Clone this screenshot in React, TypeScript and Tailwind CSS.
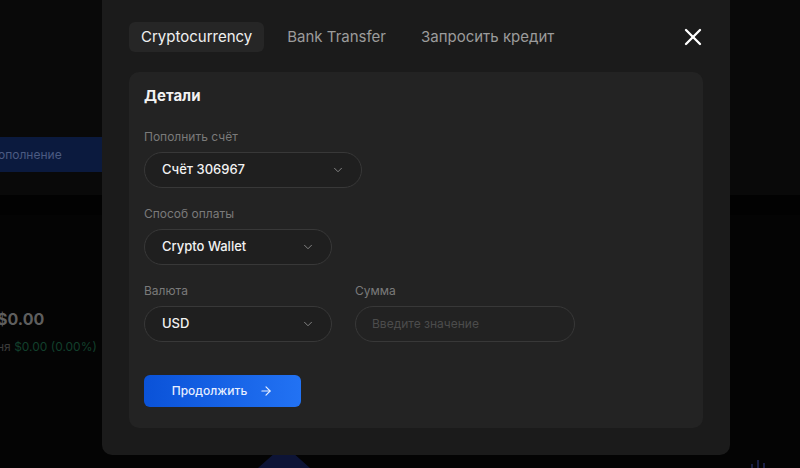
import { ChevronDown, ArrowRight, X } from "lucide-react";

const FONT = { fontFamily: "Inter, 'Noto Sans', sans-serif" };

const TABS = ["Cryptocurrency", "Bank Transfer", "Запросить кредит"];

function Select({ value, width }: { value: string; width: string }) {
  return (
    <div
      className={`flex h-9 ${width} items-center justify-between rounded-full border border-[#383838] bg-[#1f1f1f] pl-[17px] pr-[16px]`}
    >
      <span className="text-[13px] font-medium text-[#f2f2f2]">{value}</span>
      <ChevronDown className="h-[14px] w-[14px] text-[#8a8a8a]" strokeWidth={1.6} />
    </div>
  );
}

function Label({ children }: { children: string }) {
  return <div className="h-[14px] text-[12px] leading-[14px] text-[#7a7a7a]">{children}</div>;
}

export default function App() {
  return (
    <div className="relative h-[468px] w-[800px] overflow-hidden bg-[#040404]" style={FONT}>
      {/* page behind the dialog */}
      <div className="flex h-full flex-col">
        <div className="flex h-[195px] flex-col bg-[#090909]">
          <div className="h-[137px]" />
          <div className="flex h-[35px] w-[110px] items-center bg-[#0b1a3e] text-[12px] text-[#4b5b82]">
            <span className="-ml-[2px]">ополнение</span>
          </div>
        </div>
        <div className="h-[20px] bg-[#020202]" />
        <div className="flex flex-col pt-[94px]">
          <div className="-ml-[3px] text-[16px] font-bold leading-5 text-[#5e5e5e]">$0.00</div>
          <div className="mt-[9px] -ml-[3px] text-[12px] text-[#3c3c3c]">
            ня <span className="text-[#12402c]">$0.00 (0.00%)</span>
          </div>
        </div>
      </div>
      <svg className="absolute bottom-0 left-[258px]" width="52" height="16" viewBox="0 0 52 16">
        <path d="M18 0 H34 L52 16 H0 Z" fill="#0d1436" />
      </svg>
      <svg className="absolute bottom-0 left-[742px]" width="30" height="10" viewBox="0 0 30 10">
        <path d="M10 10 V6 M16 10 V2 M22 10 V5" stroke="#1a1f44" strokeWidth="2" />
      </svg>

      {/* dialog */}
      <div className="absolute left-[102px] top-0 flex h-[455px] w-[628px] flex-col rounded-b-[10px] bg-[#1b1b1b] px-[27px] pb-[27px] pt-[22px]">
        <div className="flex h-[30px] items-center">
          <div className="flex items-center gap-[11px]">
            {TABS.map((t, i) => (
              <button
                key={t}
                className={`h-[30px] rounded-md px-3 text-[15px] ${
                  i === 0 ? "bg-[#262626] text-[#f0f0f0]" : "text-[#9c9c9c]"
                }`}
              >
                {t}
              </button>
            ))}
          </div>
          <X className="ml-auto mr-[-4px] h-7 w-7 text-white" strokeWidth={2} />
        </div>

        <div className="mt-5 flex flex-1 flex-col rounded-[10px] bg-[#232323] px-[15px] pt-[15px]">
          <div className="text-[15px] font-bold leading-[18px] text-[#f2f2f2]">Детали</div>

          <div className="mt-[25px] flex flex-col gap-2">
            <Label>Пополнить счёт</Label>
            <Select value="Счёт 306967" width="w-[218px]" />
          </div>

          <div className="mt-[19px] flex flex-col gap-2">
            <Label>Способ оплаты</Label>
            <Select value="Crypto Wallet" width="w-[188px]" />
          </div>

          <div className="mt-[19px] flex gap-[23px]">
            <div className="flex flex-col gap-2">
              <Label>Валюта</Label>
              <Select value="USD" width="w-[188px]" />
            </div>
            <div className="flex flex-col gap-2">
              <Label>Сумма</Label>
              <div className="flex h-9 w-[220px] items-center rounded-full border border-[#383838] bg-[#222] pl-[16px]">
                <span className="text-[12px] text-[#4c4c4c]">Введите значение</span>
              </div>
            </div>
          </div>

          <button className="mt-[33px] flex h-8 w-[157px] items-center justify-center gap-3 rounded-md bg-gradient-to-r from-[#0a52d8] to-[#2272f3] text-[12px] font-medium text-[#e8efff]">
            Продолжить
            <ArrowRight className="h-[14px] w-[14px]" strokeWidth={2} />
          </button>
        </div>
      </div>
    </div>
  );
}
